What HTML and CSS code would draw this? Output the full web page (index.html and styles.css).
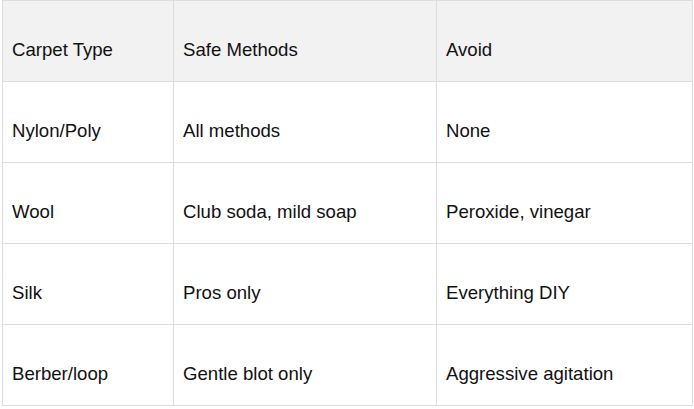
FILE: index.html
```html
<!DOCTYPE html>
<html lang="en">
<head>
<meta charset="utf-8">
<title>Carpet Types</title>
<link rel="stylesheet" href="styles.css">
</head>
<body>
<div class="wrap">
<table class="carpet">
  <thead>
    <tr><th>Carpet Type</th><th>Safe Methods</th><th>Avoid</th></tr>
  </thead>
  <tbody>
    <tr><td>Nylon/Poly</td><td>All methods</td><td>None</td></tr>
    <tr><td>Wool</td><td>Club soda, mild soap</td><td>Peroxide, vinegar</td></tr>
    <tr><td>Silk</td><td>Pros only</td><td>Everything DIY</td></tr>
    <tr><td>Berber/loop</td><td>Gentle blot only</td><td>Aggressive agitation</td></tr>
  </tbody>
</table>
</div>
</body>
</html>
```
FILE: styles.css
```css
html, body {
  margin: 0;
  padding: 0;
  background: #ffffff;
}
.wrap {
  padding: 0 2px;
}
.carpet {
  width: 690px;
  border-collapse: collapse;
  font-family: "Liberation Sans", Arial, sans-serif;
  font-size: 18.6px;
  color: #111111;
  table-layout: fixed;
}
.carpet th,
.carpet td {
  border: 1px solid #dddddd;
  height: 81px;
  padding: 18px 10px 0 9px;
  text-align: left;
  vertical-align: middle;
  font-weight: normal;
  box-sizing: border-box;
}
.carpet th {
  background: #f2f2f2;
}
.carpet th:nth-child(1) { width: 171px; }
.carpet th:nth-child(2) { width: 263px; }
.carpet th:nth-child(3) { width: 256px; }
```
